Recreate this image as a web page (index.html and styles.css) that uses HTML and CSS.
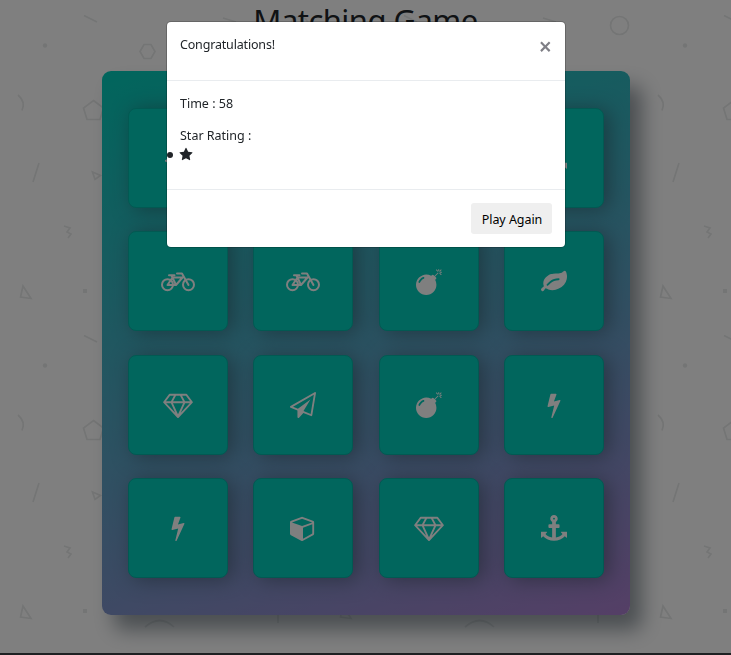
FILE: index.html
```
<!DOCTYPE html>
<html lang="en">
<head>
<meta charset="utf-8">
<title>Matching Game</title>
<link rel="stylesheet" href="styles.css">
</head>
<body>
<svg class="defs" width="0" height="0" aria-hidden="true">
  <symbol id="bolt" viewBox="0 0 1792 1792"><path d="M1333 566q18 20 7 44l-540 1157q-13 25-42 25-4 0-14-2-17-5-25.500-19t-4.500-30l197-808-406 101q-4 1-12 1-18 0-31-11-18-15-13-39l201-825q4-14 16-23t28-9h328q19 0 32 12.500t13 29.500q0 8-5 18l-171 463 396-98q8-2 12-2 19 0 34 15z"/></symbol>
  <symbol id="star" viewBox="0 0 1792 1792"><path d="M1728 647q0 22-26 48l-363 354 86 500q1 7 1 20 0 21-10.500 35.500t-30.500 14.500q-19 0-40-12l-449-236-449 236q-22 12-40 12-21 0-31.500-14.500t-10.500-35.500q0-6 2-20l86-500-364-354q-25-27-25-48 0-37 56-46l502-73 225-455q19-41 49-41t49 41l225 455 502 73q56 9 56 46z"/></symbol>
  <symbol id="cube" viewBox="0 0 1792 1792"><path d="M896 1629l640-349v-636l-640 233v752zm-64-865l698-254-698-254-698 254zm832-252v768q0 35-18 65t-49 47l-704 384q-28 16-61 16t-61-16l-704-384q-31-17-49-47t-18-65v-768q0-40 23-73t61-47l704-256q22-8 44-8t44 8l704 256q38 14 61 47t23 73z"/></symbol>
  <symbol id="anchor" viewBox="0 0 1792 1792"><path d="M960 256q0-26-19-45t-45-19-45 19-19 45 19 45 45 19 45-19 19-45zm832 928v352q0 22-20 30-8 2-12 2-12 0-23-9l-93-93q-119 143-318.500 226.500t-429.500 83.500-429.500-83.500-318.500-226.500l-93 93q-9 9-23 9-4 0-12-2-20-8-20-30v-352q0-14 9-23t23-9h352q22 0 30 20 8 19-7 35l-100 100q67 91 189.500 153.500t271.500 82.500v-647h-192q-26 0-45-19t-19-45v-128q0-26 19-45t45-19h192v-163q-58-34-93-92.500t-35-128.500q0-106 75-181t181-75 181 75 75 181q0 70-35 128.500t-93 92.500v163h192q26 0 45 19t19 45v128q0 26-19 45t-45 19h-192v647q149-20 271.500-82.500t189.500-153.500l-100-100q-15-16-7-35 8-20 30-20h352q14 0 23 9t9 23z"/></symbol>
  <symbol id="leaf" viewBox="0 0 1792 1792"><path d="M1280 704q0-26-19-45t-45-19q-172 0-318 49.500t-259.500 134-235.500 219.500q-19 21-19 45 0 26 19 45t45 19q24 0 45-19 27-24 74-71t67-66q137-124 268.500-176t313.500-52q26 0 45-19t19-45zm512-198q0 95-20 193-46 224-184.500 383t-357.500 268q-214 108-438 108-148 0-286-47-15-5-88-42t-96-37q-16 0-39.500 32t-45 70-52.500 70-60 32q-43 0-63.500-17.500t-45.500-59.500q-2-4-6-11t-5.500-10-3-9.500-1.500-13.500q0-35 31-73.500t68-65.500 68-56 31-48q0-4-14-38t-16-44q-9-51-9-104 0-115 43.500-220t119-184.500 170.500-139 204-95.500q55-18 145-25.500t179.500-9 178.500-6 163.500-24 113.500-56.500l29.500-29.500 29.500-28 27-20 36.500-16 43.500-4.500q39 0 70.500 46t47.500 112 24 124 8 96z"/></symbol>
  <symbol id="diamond" viewBox="0 0 2048 1792"><path d="M212 768l623 665-300-665h-323zm812 772l349-772h-698zm-486-900l204-384h-262l-288 384h346zm675 793l623-665h-323zm-530-793h682l-204-384h-274zm827 0h346l-288-384h-262zm141-486l384 512q14 18 13 41.500t-17 40.500l-960 1024q-18 20-47 20t-47-20l-960-1024q-16-17-17-40.500t13-41.500l384-512q18-26 51-26h1152q33 0 51 26z"/></symbol>
  <symbol id="plane" viewBox="0 0 1792 1792"><path d="M1764 11q33 24 27 64l-256 1536q-5 29-32 45-14 8-31 8-11 0-24-5l-527-215-298 327q-18 21-47 21-14 0-23-4-19-7-30-23.500t-11-36.500v-452l-472-193q-37-14-40-55-3-39 32-59l1664-960q35-21 68 2zm-342 1499l221-1323-1434 827 336 137 863-639-478 797z"/></symbol>
  <symbol id="bomb" viewBox="0 0 1792 1792"><path d="M571 589q-10-25-34-35t-49 0q-108 44-191 127t-127 191q-10 25 0 49t35 34q13 5 24 5 42 0 60-40 34-84 98.500-148.500t148.500-98.500q25-11 35-35t0-49zm942-356l46 46-244 243 68 68q19 19 19 45.500t-19 45.500l-64 64q89 161 89 343 0 143-55.500 273.500t-150 225-225 150-273.500 55.500-273.500-55.500-225-150-150-225-55.500-273.500 55.500-273.500 150-225 225-150 273.500-55.500q182 0 343 89l64-64q19-19 45.500-19t45.500 19l68 68zm8-56q-10 10-22 10-13 0-23-10l-91-90q-9-10-9-23t9-23q10-9 23-9t23 9l90 91q10 9 10 22.500t-10 22.500zm230 230q-11 9-23 9t-23-9l-90-91q-10-9-10-22.500t10-22.500q9-10 22.500-10t22.500 10l91 90q9 10 9 23t-9 23zm41-183q0 14-9 23t-23 9h-96q-14 0-23-9t-9-23 9-23 23-9h96q14 0 23 9t9 23zm-192-192v96q0 14-9 23t-23 9-23-9-9-23v-96q0-14 9-23t23-9 23 9 9 23zm151 55l-91 90q-10 10-22 10-13 0-23-10-10-9-10-22.500t10-22.500l90-91q10-9 23-9t23 9q9 10 9 23t-9 23z"/></symbol>
  <symbol id="bicycle" viewBox="0 0 34 26"><g fill="none" stroke="currentColor" stroke-width="2" stroke-linejoin="round" stroke-linecap="round"><circle cx="6.500" cy="15.700" r="5.500"/><circle cx="27.500" cy="15.700" r="5.500"/><path d="M6.500 16h8.500L21.500 8.500H11.500L6.500 16M15 16L10.500 6.500M8 6.300h5.500M27.500 16L21 4.500h-5"/></g></symbol>
</svg>

<svg class="doodles" aria-hidden="true">
  <defs>
    <pattern id="tile" width="320" height="320" patternUnits="userSpaceOnUse">
      <g fill="none" stroke="#e8eaea" stroke-width="1.700">
        <path d="M84 15.500l13 6.500M223 18l13 4M18 95q8 7 4 15.500M39 163l-6 19M64 226l6 2-3 4 4 2-3 4M278 289v14M145 307q15-13 29 0"/>
        <path d="M140 51.500l4-7h7l4 7-4 7h-7zM93.500 100.500l10 7.500-3.500 11.500H87L83.500 108zM92.500 172l8 3.500-5.500 4zM23 286l8 12.500-10.500-1.500z"/>
        <circle cx="299.500" cy="25.500" r="9"/>
      </g>
      <circle cx="45" cy="45.500" r="2.200" fill="#e8eaea"/>
      <rect x="83" y="289" width="4" height="4" fill="#e8eaea"/>
    </pattern>
  </defs>
  <rect width="100%" height="100%" fill="url(#tile)"/>
</svg>

<main class="page">
  <h1 class="title">Matching Game</h1>
  <ul class="deck">
    <li class="card"><svg class="icon"><use href="#plane"/></svg></li>
    <li class="card"><svg class="icon"><use href="#leaf"/></svg></li>
    <li class="card"><svg class="icon"><use href="#cube"/></svg></li>
    <li class="card"><svg class="icon"><use href="#anchor"/></svg></li>
    <li class="card"><svg class="icon icon-bike"><use href="#bicycle"/></svg></li>
    <li class="card"><svg class="icon icon-bike"><use href="#bicycle"/></svg></li>
    <li class="card"><svg class="icon"><use href="#bomb"/></svg></li>
    <li class="card"><svg class="icon"><use href="#leaf"/></svg></li>
    <li class="card"><svg class="icon icon-wide"><use href="#diamond"/></svg></li>
    <li class="card"><svg class="icon"><use href="#plane"/></svg></li>
    <li class="card"><svg class="icon"><use href="#bomb"/></svg></li>
    <li class="card"><svg class="icon"><use href="#bolt"/></svg></li>
    <li class="card"><svg class="icon"><use href="#bolt"/></svg></li>
    <li class="card"><svg class="icon"><use href="#cube"/></svg></li>
    <li class="card"><svg class="icon icon-wide"><use href="#diamond"/></svg></li>
    <li class="card"><svg class="icon"><use href="#anchor"/></svg></li>
  </ul>
</main>
<footer class="footer"></footer>

<div class="overlay">
  <section class="modal" role="dialog">
    <header class="modal-header">
      <p class="text heading">Congratulations!</p>
      <button class="close" type="button">×</button>
    </header>
    <div class="modal-body">
      <p class="text">Time : 58</p>
      <p class="text rating">Star Rating :</p>
      <ul class="stars"><li><svg class="star"><use href="#star"/></svg></li></ul>
    </div>
    <footer class="modal-footer">
      <button class="again" type="button">Play Again</button>
    </footer>
  </section>
</div>
</body>
</html>
```
FILE: styles.css
```
* { box-sizing: border-box; }

body {
  margin: 0;
  height: 655px;
  overflow: hidden;
  display: flex;
  flex-direction: column;
  background: #fff;
  color: #212529;
  font-family: "Noto Sans", "Open Sans", sans-serif;
  font-size: 12.5px;
}

p, h1, ul { margin: 0; padding: 0; }

.defs { position: absolute; }

.doodles {
  position: absolute;
  inset: 0;
  width: 100%;
  height: 100%;
  z-index: -1;
}

.page {
  height: 653px;
  flex: none;
  display: flex;
  flex-direction: column;
  align-items: center;
}

.title {
  height: 71px;
  font-size: 31px;
  font-weight: 400;
  line-height: 40px;
  letter-spacing: -.55px;
  white-space: nowrap;
}

.deck {
  width: 528px;
  height: 544px;
  padding: 37px 26px;
  display: grid;
  grid-template-columns: repeat(4, 100px);
  grid-template-rows: repeat(4, 100px);
  justify-content: space-between;
  align-content: space-between;
  list-style: none;
  border-radius: 9px;
  background: linear-gradient(160deg, #02ccba 0%, #aa7ecd 100%);
  box-shadow: 12px 15px 20px 0 rgba(46, 61, 73, .5);
  margin-left: 1px;
}

.card {
  display: flex;
  align-items: center;
  justify-content: center;
  padding-top: 1px;
  color: #fff;
  background: #02ccba;
  border: 1px solid #04b3a4;
  border-radius: 8px;
  box-shadow: 5px 2px 20px 0 rgba(46, 61, 73, .5);
}

.icon {
  width: 26px;
  height: 26px;
  fill: currentColor;
}

.icon-wide { width: 30px; }
.icon-bike { width: 34px; }

.footer {
  height: 2px;
  flex: none;
  background: #3c4044;
}

.overlay {
  position: fixed;
  inset: 0;
  display: flex;
  justify-content: center;
  align-items: flex-start;
  padding: 22px 0 0 1px;
  background: rgba(0, 0, 0, .5);
}

.modal {
  width: 398px;
  height: 225px;
  display: flex;
  flex-direction: column;
  background: #fff;
  border-radius: 4px;
  box-shadow: 0 0 0 1px rgba(0, 0, 0, .2);
}

.modal-header {
  height: 59px;
  padding: 13px;
  display: flex;
  justify-content: space-between;
  align-items: flex-start;
  border-bottom: 1px solid #e9ecef;
}

.text { line-height: 19px; }

.heading { letter-spacing: -.17px; }

.close {
  padding: 0;
  border: 0;
  background: none;
  color: #7f7f86;
  font: 600 23px/22px "Noto Sans", sans-serif;
}

.modal-body {
  height: 109px;
  padding: 13px;
  border-bottom: 1px solid #e9ecef;
}

.rating { margin-top: 13px; }

.stars {
  line-height: 19px;
  list-style: none;
}

.stars li {
  display: flex;
  align-items: center;
  gap: 6px;
  margin-left: -13px;
}

.stars li::before {
  content: "";
  width: 6px;
  height: 6px;
  margin-top: 1px;
  border-radius: 50%;
  background: #212529;
}

.star {
  display: block;
  width: 14px;
  height: 19px;
  fill: #212529;
}

.modal-footer {
  padding: 13px;
  display: flex;
  justify-content: flex-end;
}

.again {
  width: 81px;
  height: 31px;
  padding: 2px 0 0 1px;
  border: 0;
  border-radius: 3px;
  background: #efefef;
  color: #000;
  font: inherit;
  letter-spacing: -.05px;
  white-space: nowrap;
}
```
